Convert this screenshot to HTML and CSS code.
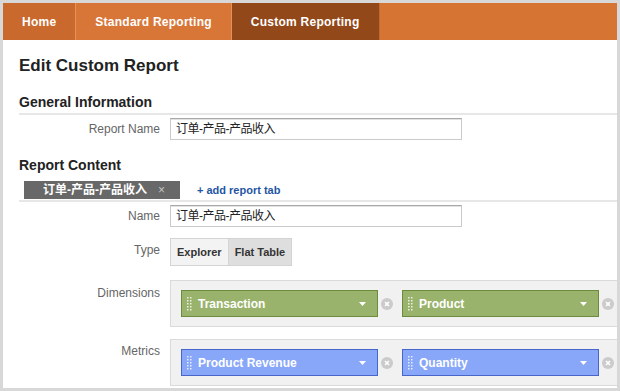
FILE: index.html
```html
<!DOCTYPE html>
<html>
<head>
<meta charset="utf-8">
<title>Edit Custom Report</title>
<link rel="stylesheet" href="styles.css">
</head>
<body>
<div class="frame">
  <nav class="topnav">
    <a class="nav-tab nav-home">Home</a>
    <a class="nav-tab">Standard Reporting</a>
    <a class="nav-tab nav-active">Custom Reporting</a>
  </nav>
  <main class="content">
    <h1 class="page-title">Edit Custom Report</h1>

    <h2 class="section-title section-rule">General Information</h2>
    <div class="form-row row-tight">
      <span class="form-label">Report Name</span>
      <div class="text-input">订单-产品-产品收入</div>
    </div>

    <h2 class="section-title section-content">Report Content</h2>
    <div class="tabbar">
      <div class="report-tab">
        <span class="report-tab-name">订单-产品-产品收入</span>
        <span class="report-tab-close">×</span>
      </div>
      <a class="add-tab">+ add report tab</a>
    </div>
    <div class="form-row row-tight">
      <span class="form-label">Name</span>
      <div class="text-input">订单-产品-产品收入</div>
    </div>
    <div class="form-row row-type">
      <span class="form-label label-type">Type</span>
      <div class="toggle">
        <span class="toggle-btn">Explorer</span>
        <span class="toggle-btn toggle-on">Flat Table</span>
      </div>
    </div>
    <div class="form-row row-dims">
      <span class="form-label label-dims">Dimensions</span>
      <div class="pill-box">
        <div class="pill-item">
          <div class="pill pill-green">
            <svg class="pill-handle" viewBox="0 0 5 14"><g fill="#fff" fill-opacity=".8"><rect x="0" y="0" width="1.5" height="1.5"/><rect x="3" y="0" width="1.5" height="1.5"/><rect x="0" y="3" width="1.5" height="1.5"/><rect x="3" y="3" width="1.5" height="1.5"/><rect x="0" y="6" width="1.5" height="1.5"/><rect x="3" y="6" width="1.5" height="1.5"/><rect x="0" y="9" width="1.5" height="1.5"/><rect x="3" y="9" width="1.5" height="1.5"/><rect x="0" y="12" width="1.5" height="1.5"/><rect x="3" y="12" width="1.5" height="1.5"/></g></svg>
            <span class="pill-text">Transaction</span>
            <svg class="pill-arrow" viewBox="0 0 7 4"><path d="M0 0h7L3.5 4z" fill="#fff"/></svg>
          </div>
          <svg class="pill-remove" viewBox="0 0 12 12"><circle cx="6" cy="6" r="6" fill="#cbcbcb"/><path d="M4 4l4 4M8 4l-4 4" stroke="#fff" stroke-width="1.6"/></svg>
        </div>
        <div class="pill-item">
          <div class="pill pill-green">
            <svg class="pill-handle" viewBox="0 0 5 14"><g fill="#fff" fill-opacity=".8"><rect x="0" y="0" width="1.5" height="1.5"/><rect x="3" y="0" width="1.5" height="1.5"/><rect x="0" y="3" width="1.5" height="1.5"/><rect x="3" y="3" width="1.5" height="1.5"/><rect x="0" y="6" width="1.5" height="1.5"/><rect x="3" y="6" width="1.5" height="1.5"/><rect x="0" y="9" width="1.5" height="1.5"/><rect x="3" y="9" width="1.5" height="1.5"/><rect x="0" y="12" width="1.5" height="1.5"/><rect x="3" y="12" width="1.5" height="1.5"/></g></svg>
            <span class="pill-text">Product</span>
            <svg class="pill-arrow" viewBox="0 0 7 4"><path d="M0 0h7L3.5 4z" fill="#fff"/></svg>
          </div>
          <svg class="pill-remove" viewBox="0 0 12 12"><circle cx="6" cy="6" r="6" fill="#cbcbcb"/><path d="M4 4l4 4M8 4l-4 4" stroke="#fff" stroke-width="1.6"/></svg>
        </div>
      </div>
    </div>
    <div class="form-row row-metrics">
      <span class="form-label label-metrics">Metrics</span>
      <div class="pill-box">
        <div class="pill-item">
          <div class="pill pill-blue">
            <svg class="pill-handle" viewBox="0 0 5 14"><g fill="#fff" fill-opacity=".8"><rect x="0" y="0" width="1.5" height="1.5"/><rect x="3" y="0" width="1.5" height="1.5"/><rect x="0" y="3" width="1.5" height="1.5"/><rect x="3" y="3" width="1.5" height="1.5"/><rect x="0" y="6" width="1.5" height="1.5"/><rect x="3" y="6" width="1.5" height="1.5"/><rect x="0" y="9" width="1.5" height="1.5"/><rect x="3" y="9" width="1.5" height="1.5"/><rect x="0" y="12" width="1.5" height="1.5"/><rect x="3" y="12" width="1.5" height="1.5"/></g></svg>
            <span class="pill-text">Product Revenue</span>
            <svg class="pill-arrow" viewBox="0 0 7 4"><path d="M0 0h7L3.5 4z" fill="#fff"/></svg>
          </div>
          <svg class="pill-remove" viewBox="0 0 12 12"><circle cx="6" cy="6" r="6" fill="#cbcbcb"/><path d="M4 4l4 4M8 4l-4 4" stroke="#fff" stroke-width="1.6"/></svg>
        </div>
        <div class="pill-item">
          <div class="pill pill-blue">
            <svg class="pill-handle" viewBox="0 0 5 14"><g fill="#fff" fill-opacity=".8"><rect x="0" y="0" width="1.5" height="1.5"/><rect x="3" y="0" width="1.5" height="1.5"/><rect x="0" y="3" width="1.5" height="1.5"/><rect x="3" y="3" width="1.5" height="1.5"/><rect x="0" y="6" width="1.5" height="1.5"/><rect x="3" y="6" width="1.5" height="1.5"/><rect x="0" y="9" width="1.5" height="1.5"/><rect x="3" y="9" width="1.5" height="1.5"/><rect x="0" y="12" width="1.5" height="1.5"/><rect x="3" y="12" width="1.5" height="1.5"/></g></svg>
            <span class="pill-text">Quantity</span>
            <svg class="pill-arrow" viewBox="0 0 7 4"><path d="M0 0h7L3.5 4z" fill="#fff"/></svg>
          </div>
          <svg class="pill-remove" viewBox="0 0 12 12"><circle cx="6" cy="6" r="6" fill="#cbcbcb"/><path d="M4 4l4 4M8 4l-4 4" stroke="#fff" stroke-width="1.6"/></svg>
        </div>
      </div>
    </div>
  </main>
</div>
</body>
</html>
```

FILE: styles.css
```css
html, body {
  margin: 0;
  padding: 0;
  background: #fff;
}

.frame {
  width: 620px;
  height: 391px;
  box-sizing: border-box;
  border: 3px solid #d8d8d8;
  overflow: hidden;
  background: #fff;
  font-family: "Liberation Sans", Arial, "Noto Sans CJK SC", sans-serif;
  color: #222;
}

/* top navigation */
.topnav {
  display: flex;
  height: 37px;
  background: #d67434;
}

.nav-tab {
  display: flex;
  align-items: center;
  padding: 1px 19px 0;
  background: #d87637;
  border-right: 1px solid #e5935b;
  color: #fff;
  font-size: 12px;
  font-weight: bold;
  letter-spacing: 0.25px;
  white-space: nowrap;
}

.nav-home {
  background: #c9692d;
}

.nav-active {
  background: #93481a;
  border-right-color: #c06a33;
}

/* content */
.content {
  padding: 0 0 0 16px;
}

.page-title {
  margin: 16px 0 0;
  font-size: 17px;
  line-height: 20px;
  font-weight: bold;
  color: #222;
}

.section-title {
  margin: 18px 0 0;
  font-size: 14px;
  line-height: 17px;
  font-weight: bold;
  color: #222;
}

.section-rule {
  padding-bottom: 2px;
  border-bottom: 2px solid #e7e7e7;
}

.section-content {
  margin-top: 17px;
}

/* form rows */
.form-row {
  display: flex;
  align-items: flex-start;
}

.row-tight {
  margin-top: 3px;
}

.row-type {
  margin-top: 11px;
}

.row-dims {
  margin-top: 14px;
}

.row-metrics {
  margin-top: 12px;
}

.form-label {
  flex: none;
  width: 141px;
  margin-right: 10px;
  padding-top: 4px;
  text-align: right;
  font-size: 12px;
  line-height: 14px;
  color: #666;
}

.label-type {
  padding-top: 5px;
}

.label-dims {
  padding-top: 6px;
}

.label-metrics {
  padding-top: 5px;
}

.text-input {
  width: 292px;
  height: 22px;
  box-sizing: border-box;
  padding: 0 5px;
  border: 1px solid #cacaca;
  border-top-color: #a9a9a9;
  box-shadow: inset 0 1px 0 #e2e2e2;
  font-family: "Liberation Sans", "Noto Sans CJK SC", sans-serif;
  font-size: 12px;
  line-height: 20px;
  letter-spacing: -0.5px;
  color: #222;
}

/* report tabs */
.tabbar {
  display: flex;
  align-items: center;
  margin-top: 7px;
  padding: 0 0 1px 5px;
  border-bottom: 2px solid #e7e7e7;
}

.report-tab {
  display: flex;
  align-items: center;
  width: 156px;
  height: 18px;
  box-sizing: border-box;
  padding-left: 19px;
  background: #686868;
  color: #fff;
}

.report-tab-name {
  font-family: "Liberation Sans", "Noto Sans CJK SC", sans-serif;
  font-size: 12px;
  font-weight: bold;
  letter-spacing: 0;
  line-height: 18px;
  white-space: nowrap;
}

.report-tab-close {
  margin-left: 11px;
  font-size: 12px;
  line-height: 18px;
  color: #c4c4c4;
}

.add-tab {
  margin-left: 17px;
  font-size: 11px;
  font-weight: bold;
  color: #1f56a3;
}

/* type toggle */
.toggle {
  display: flex;
  height: 28px;
  box-sizing: border-box;
  border: 1px solid #d4d4d4;
}

.toggle-btn {
  display: flex;
  align-items: center;
  padding: 0 6px;
  background: #f3f3f3;
  font-size: 11px;
  font-weight: bold;
  color: #333;
}

.toggle-on {
  background: #dedede;
  border-left: 1px solid #d4d4d4;
}

/* dimension / metric pills */
.pill-box {
  flex: 1;
  display: flex;
  align-items: center;
  gap: 9px;
  padding: 9px 10px;
  background: #f1f1f1;
  border: 1px solid #dadada;
}

.pill-item {
  display: flex;
  align-items: center;
}

.pill {
  display: flex;
  align-items: center;
  width: 197px;
  height: 27px;
  box-sizing: border-box;
  padding: 0 11px 0 5px;
  border: 1px solid;
  color: #fff;
  font-size: 12px;
  font-weight: bold;
}

.pill-green {
  background: #9ab36c;
  border-color: #6c8b3c;
}

.pill-blue {
  background: #88a7f9;
  border-color: #4865c9;
}

.pill-handle {
  flex: none;
  width: 5px;
  height: 14px;
  margin-right: 6px;
}

.pill-text {
  flex: 1;
  white-space: nowrap;
}

.pill-arrow {
  flex: none;
  width: 7px;
  height: 4px;
}

.pill-remove {
  flex: none;
  width: 12px;
  height: 12px;
  margin-left: 3px;
}
```
